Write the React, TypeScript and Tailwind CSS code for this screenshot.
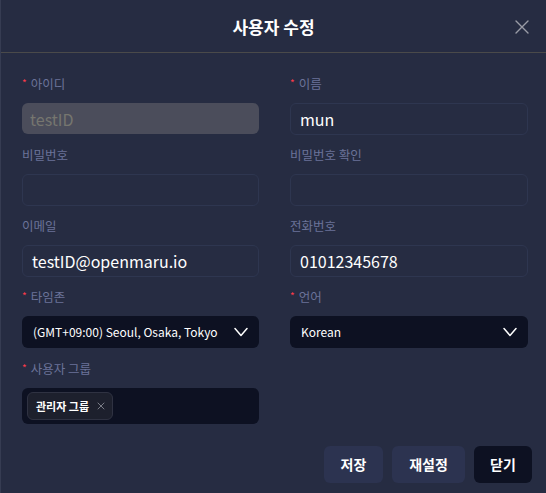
import { X } from "lucide-react";

type FieldProps = {
    label: string;
    required?: boolean;
    children: React.ReactNode;
};

function Field({ label, required, children }: FieldProps) {
    return (
        <div className="flex flex-col gap-[9px]">
            <div className="flex h-5 items-center text-[12.5px] text-[#6b7399]">
                {required ? <span className="mr-1 -mt-1 text-[10px] text-[#ff3b4a]">*</span> : null}
                <span>{label}</span>
            </div>
            {children}
        </div>
    );
}

function TextInput({ value, disabled }: { value?: string; disabled?: boolean }) {
    return (
        <div
            className={
                disabled
                    ? "flex h-[31px] items-center rounded-md bg-[#4b4d5b] px-2 text-[16px] text-[#76766f]"
                    : "flex h-[32px] items-center rounded-md border border-[#2e3650] bg-[#262c42] px-[9px] text-[16px] text-white"
            }
        >
            {value}
        </div>
    );
}

function Chevron() {
    return (
        <svg width="14" height="10" viewBox="0 0 14 10" fill="none" className="shrink-0">
            <path d="M1 1.5 L7 8.5 L13 1.5" stroke="white" strokeWidth="1.5" strokeLinecap="round" strokeLinejoin="round" />
        </svg>
    );
}

function Select({ value }: { value: string }) {
    return (
        <div className="flex h-[32px] items-center justify-between rounded-md bg-[#0d1122] pl-[11px] pr-[11px] text-[12px] text-white">
            <span className="whitespace-nowrap">{value}</span>
            <Chevron />
        </div>
    );
}

export default function App() {
    return (
        <div
            className="flex h-[493px] w-[546px] flex-col border-l border-[#363c52] bg-[#262c42]"
            style={{ fontFamily: '"Noto Sans CJK KR", "Noto Sans", sans-serif' }}
        >
            <div className="relative flex h-[53px] shrink-0 items-center justify-center border-b border-[#4a4a4a]">
                <span className="mt-[2px] text-[17px] font-bold text-white">사용자 수정</span>
                <svg
                    width="14"
                    height="14"
                    viewBox="0 0 14 14"
                    className="absolute right-[17px] top-[20px]"
                    fill="none"
                >
                    <path d="M1 1 L13 13 M13 1 L1 13" stroke="#9a9ca6" strokeWidth="1.4" strokeLinecap="round" />
                </svg>
            </div>

            <div className="grid grid-cols-[237px_238px] gap-x-[31px] gap-y-[10px] pl-[21px] pt-[21px]">
                <Field label="아이디" required>
                    <TextInput value="testID" disabled />
                </Field>
                <Field label="이름" required>
                    <TextInput value="mun" />
                </Field>
                <Field label="비밀번호">
                    <TextInput />
                </Field>
                <Field label="비밀번호 확인">
                    <TextInput />
                </Field>
                <Field label="이메일">
                    <TextInput value="testID@openmaru.io" />
                </Field>
                <Field label="전화번호">
                    <TextInput value="01012345678" />
                </Field>
                <Field label="타임존" required>
                    <Select value="(GMT+09:00) Seoul, Osaka, Tokyo" />
                </Field>
                <Field label="언어" required>
                    <Select value="Korean" />
                </Field>
                <div className="mt-[1px]">
                    <Field label="사용자 그룹" required>
                        <div className="flex h-[36px] items-center rounded-md bg-[#0d1122] px-[5px]">
                            <div className="flex h-[28px] items-center gap-[6px] rounded-md border border-[#2f3242] bg-[#1d202d] pl-[8px] pr-[5px] text-[11px] font-bold text-white">
                                <span>관리자 그룹</span>
                                <X size={12} strokeWidth={1.5} className="text-[#9a9ca6]" />
                            </div>
                        </div>
                    </Field>
                </div>
            </div>

            <div className="mt-auto flex justify-end gap-[9px] pb-[10px] pr-[14px]">
                <button className="h-[37px] w-[59px] rounded-md bg-[#2c3350] text-[14px] font-bold text-white">
                    저장
                </button>
                <button className="h-[37px] w-[73px] rounded-md bg-[#2c3350] text-[14px] font-bold text-white">
                    재설정
                </button>
                <button className="h-[37px] w-[58px] rounded-md bg-[#0d1122] text-[14px] font-bold text-white">
                    닫기
                </button>
            </div>
        </div>
    );
}
